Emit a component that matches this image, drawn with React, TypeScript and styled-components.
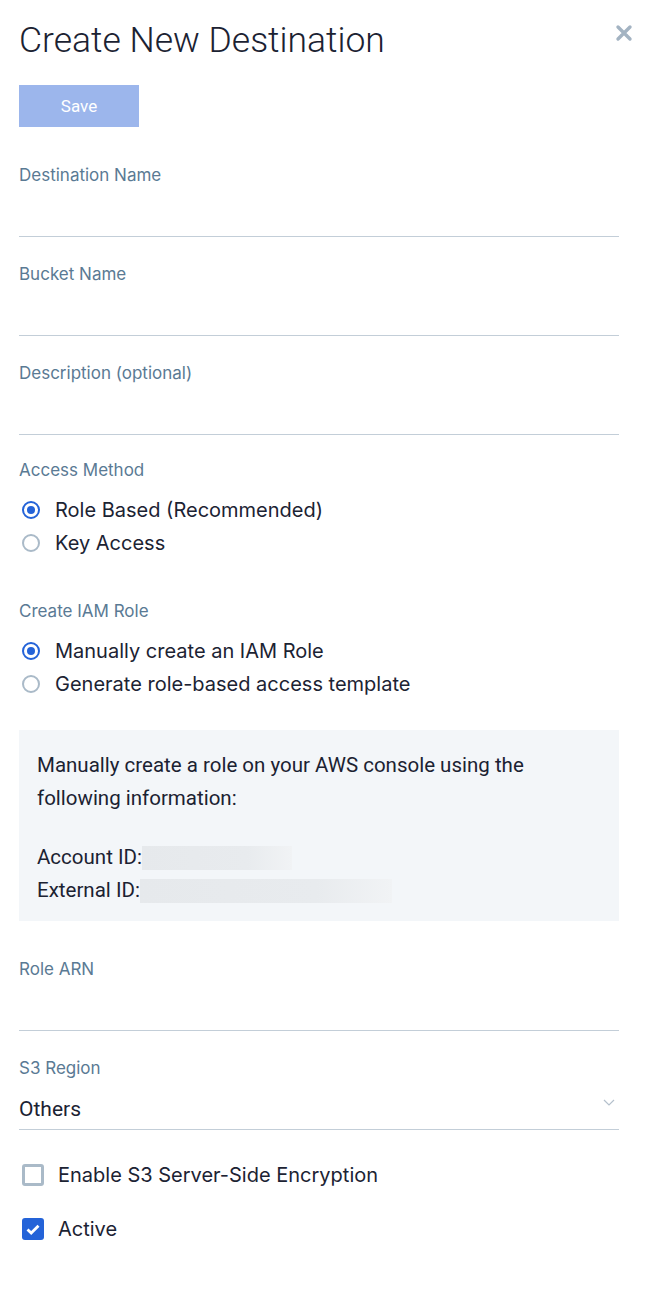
import React from 'react';
import styled, { createGlobalStyle } from 'styled-components';

const GlobalStyle = createGlobalStyle`
  body {
    margin: 0;
    background: #ffffff;
    font-family: Inter, "Noto Sans", sans-serif;
  }
`;

const Page = styled.div`
  position: relative;
  width: 657px;
  min-height: 1294px;
  box-sizing: border-box;
  padding: 0 38px 0 19px;
`;

const Title = styled.h1`
  margin: 0;
  padding-top: 20px;
  height: 40px;
  font-family: Roboto, sans-serif;
  font-weight: 300;
  font-size: 35.5px;
  line-height: 40px;
  color: #1b2232;
`;

const CloseButton = styled.button`
  position: absolute;
  top: 22px;
  right: 22px;
  width: 22px;
  height: 22px;
  padding: 0;
  border: none;
  background: none;
  cursor: pointer;
`;

const SaveButton = styled.button`
  margin-top: 25px;
  width: 120px;
  height: 42px;
  border: none;
  background: #9cb6ec;
  color: #ffffff;
  font-family: Roboto, sans-serif;
  font-size: 17px;
  cursor: default;
`;

const Fields = styled.div<{ $top: number }>`
  padding-top: ${(p) => p.$top}px;
`;

const Field = styled.div`
  height: 99px;
  display: flex;
  flex-direction: column;
`;

const FieldLabel = styled.div`
  padding-top: 27px;
  font-size: 17px;
  line-height: 20px;
  color: #5a7a94;
`;

const FieldInput = styled.div`
  margin-top: auto;
  height: 40px;
  border-bottom: 1px solid #c3ced8;
  display: flex;
  align-items: center;
  justify-content: space-between;
  font-family: Roboto, sans-serif;
  font-size: 21px;
  color: #1b2232;
`;

const Group = styled.div<{ $top: number }>`
  padding-top: ${(p) => p.$top}px;
`;

const GroupLabel = styled.div`
  font-size: 17px;
  line-height: 20px;
  color: #5a7a94;
  margin-bottom: 13px;
`;

const Option = styled.label`
  display: flex;
  align-items: center;
  gap: 15px;
  height: 33px;
  padding-left: 3px;
  font-size: 20px;
  color: #1c2333;
`;

const Radio = styled.span<{ $on?: boolean }>`
  width: 18px;
  height: 18px;
  box-sizing: border-box;
  border-radius: 50%;
  border: 2px solid ${(p) => (p.$on ? '#2463d8' : '#aabac8')};
  display: flex;
  align-items: center;
  justify-content: center;
  &::after {
    content: '';
    display: ${(p) => (p.$on ? 'block' : 'none')};
    width: 8px;
    height: 8px;
    border-radius: 50%;
    background: #2463d8;
  }
`;

const InfoBox = styled.div`
  margin-top: 30px;
  padding: 19px 18px 14px;
  background: #f3f6f9;
  font-family: Roboto, sans-serif;
  font-size: 20.5px;
  line-height: 33px;
  color: #1b2232;
`;

const InfoText = styled.div`
  max-width: 500px;
`;

const InfoGap = styled.div`
  height: 26px;
`;

const IdRow = styled.div`
  display: flex;
  align-items: center;
`;

const Redacted = styled.span<{ $w: number }>`
  display: inline-block;
  width: ${(p) => p.$w}px;
  height: 24px;
  background: linear-gradient(90deg, #e6e9ec 0%, #e8ebee 70%, #f1f3f5 100%);
`;

const CheckRow = styled.label<{ $top: number }>`
  display: flex;
  align-items: center;
  gap: 14px;
  margin-top: ${(p) => p.$top}px;
  padding-left: 3px;
  height: 22px;
  font-size: 20px;
  color: #1c2333;
`;

const Box = styled.span<{ $on?: boolean }>`
  width: 22px;
  height: 22px;
  box-sizing: border-box;
  border-radius: 3px;
  border: ${(p) => (p.$on ? 'none' : '3px solid #aabac8')};
  background: ${(p) => (p.$on ? '#2463d8' : '#ffffff')};
  display: flex;
  align-items: center;
  justify-content: center;
`;

const App: React.FC = () => {
  return (
    <Page>
      <GlobalStyle />
      <Title>Create New Destination</Title>
      <CloseButton aria-label="Close">
        <svg width="22" height="22" viewBox="0 0 22 22">
          <path d="M5 5 L17 17 M17 5 L5 17" stroke="#a3b3c2" strokeWidth="3.4" strokeLinecap="round" />
        </svg>
      </CloseButton>
      <SaveButton>Save</SaveButton>

      <Fields $top={11}>
        <Field>
          <FieldLabel>Destination Name</FieldLabel>
          <FieldInput />
        </Field>
        <Field>
          <FieldLabel>Bucket Name</FieldLabel>
          <FieldInput />
        </Field>
        <Field>
          <FieldLabel>Description (optional)</FieldLabel>
          <FieldInput />
        </Field>
      </Fields>

      <Group $top={25}>
        <GroupLabel>Access Method</GroupLabel>
        <Option><Radio $on />Role Based (Recommended)</Option>
        <Option><Radio />Key Access</Option>
      </Group>

      <Group $top={42}>
        <GroupLabel>Create IAM Role</GroupLabel>
        <Option><Radio $on />Manually create an IAM Role</Option>
        <Option><Radio />Generate role-based access template</Option>
      </Group>

      <InfoBox>
        <InfoText>Manually create a role on your AWS console using the following information:</InfoText>
        <InfoGap />
        <IdRow>Account ID:<Redacted $w={150} /></IdRow>
        <IdRow>External ID:<Redacted $w={252} /></IdRow>
      </InfoBox>

      <Fields $top={11}>
        <Field>
          <FieldLabel>Role ARN</FieldLabel>
          <FieldInput />
        </Field>
        <Field>
          <FieldLabel>S3 Region</FieldLabel>
          <FieldInput>
            Others
            <svg width="12" height="8" viewBox="0 0 12 8" style={{ marginRight: 4, marginBottom: 12 }}>
              <path d="M1 1 L6 6 L11 1" fill="none" stroke="#b4c0cc" strokeWidth="1.2" />
            </svg>
          </FieldInput>
        </Field>
      </Fields>

      <CheckRow $top={34}>
        <Box />
        Enable S3 Server-Side Encryption
      </CheckRow>
      <CheckRow $top={32}>
        <Box $on>
          <svg width="14" height="11" viewBox="0 0 14 11">
            <path d="M1.5 5.5 L5.2 9 L12.5 1.8" fill="none" stroke="#ffffff" strokeWidth="2.8" />
          </svg>
        </Box>
        Active
      </CheckRow>
    </Page>
  );
};

export default App;
